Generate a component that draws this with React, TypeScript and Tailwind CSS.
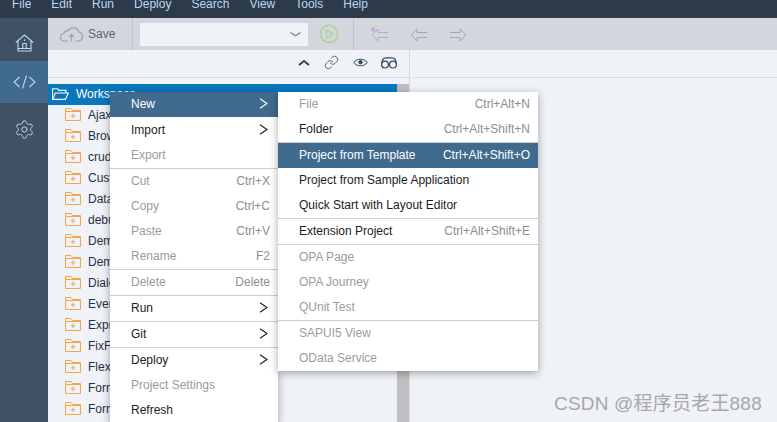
import React from 'react';
import { Settings, Link } from 'lucide-react';

const menuBar = ['File', 'Edit', 'Run', 'Deploy', 'Search', 'View', 'Tools', 'Help'];

const projects = [
  'AjaxDemo', 'BrowserDemo', 'crudDemo', 'CustomControl', 'DataBinding', 'debugDemo', 'DemoApp', 'DemoList',
  'DialogDemo', 'EventDemo', 'ExpressionDemo', 'FixFlex', 'FlexBox', 'FormDemo', 'FormSimple',
];

interface MenuItem {
  label: string;
  shortcut?: string;
  disabled?: boolean;
  active?: boolean;
  arrow?: boolean;
  line?: boolean;
  gap?: boolean;
}

const mainMenu: MenuItem[] = [
  { label: 'New', active: true, arrow: true },
  { label: 'Import', arrow: true, gap: true },
  { label: 'Export', disabled: true },
  { label: 'Cut', shortcut: 'Ctrl+X', disabled: true, line: true },
  { label: 'Copy', shortcut: 'Ctrl+C', disabled: true },
  { label: 'Paste', shortcut: 'Ctrl+V', disabled: true },
  { label: 'Rename', shortcut: 'F2', disabled: true },
  { label: 'Delete', shortcut: 'Delete', disabled: true, line: true },
  { label: 'Run', arrow: true, line: true },
  { label: 'Git', arrow: true, line: true },
  { label: 'Deploy', arrow: true, line: true },
  { label: 'Project Settings', disabled: true },
  { label: 'Refresh' },
];

const newMenu: MenuItem[] = [
  { label: 'File', shortcut: 'Ctrl+Alt+N', disabled: true },
  { label: 'Folder', shortcut: 'Ctrl+Alt+Shift+N' },
  { label: 'Project from Template', shortcut: 'Ctrl+Alt+Shift+O', active: true, line: true },
  { label: 'Project from Sample Application' },
  { label: 'Quick Start with Layout Editor' },
  { label: 'Extension Project', shortcut: 'Ctrl+Alt+Shift+E', line: true },
  { label: 'OPA Page', disabled: true, line: true },
  { label: 'OPA Journey', disabled: true },
  { label: 'QUnit Test', disabled: true },
  { label: 'SAPUI5 View', disabled: true, line: true },
  { label: 'OData Service', disabled: true },
];

const MenuChevron = () => (
  <svg width="9" height="11" viewBox="0 0 9 11" fill="none" stroke="currentColor" strokeWidth="1.1" className="mr-0.5">
    <path d="M1 0.8L8 5.5L1 10.2" />
  </svg>
);

const MenuRow: React.FC<{ item: MenuItem }> = ({ item }) => {
  const tone = item.active ? 'bg-[#416a8f] text-white' : item.disabled ? 'text-[#9b9b9b]' : 'text-[#1c1c1c]';
  return (
    <div className={item.line ? 'border-t border-[#cfcfcf]' : item.gap ? 'border-t border-transparent' : ''}>
      <div className={`flex h-[25px] items-center justify-between pb-[2px] pl-[21px] pr-2 ${tone}`}>
        <span>{item.label}</span>
        {item.shortcut && (
          <span className={item.active ? 'text-white' : 'text-[#8e8e8e]'}>{item.shortcut}</span>
        )}
        {item.arrow && <MenuChevron />}
      </div>
    </div>
  );
};

const HomeIcon = () => (
  <svg width="19" height="18" viewBox="0 0 19 18" fill="none" stroke="#bcd7f2" strokeWidth="1.1">
    <path d="M0.8 8.5L9.5 1L18.2 8.5M3 7V17H16V7M2.5 14.5H16.5" />
    <path d="M7.8 14.5V9.5H11.2V14.5" />
    <path d="M9.5 5.2V7" />
  </svg>
);

const CodeIcon = () => (
  <svg width="23" height="14" viewBox="0 0 23 14" fill="none" stroke="#bcd7f2" strokeWidth="1.1">
    <path d="M6.5 2L1 7L6.5 12M16.5 2L22 7L16.5 12M13.5 0.5L9.5 13.5" />
  </svg>
);

const CloudIcon = () => (
  <svg width="24" height="16" viewBox="0 0 24 16" fill="none" stroke="#9aa1a8" strokeWidth="1.2">
    <path d="M8 15H4.5A3.8 3.8 0 0 1 4 7.4A3.2 3.2 0 0 1 8 4.8A6 6 0 0 1 19 6.2A4.5 4.5 0 0 1 19 15H15" />
    <path d="M11.5 15.5V9M9 11L11.5 8.5L14 11" />
  </svg>
);

const WorkspaceFolder = () => (
  <svg width="17" height="12" viewBox="0 0 17 12" fill="none" stroke="#ffffff" strokeWidth="1.1">
    <path d="M0.6 11.4V0.8H5.5L7 2.4H14V5" />
    <path d="M0.6 11.4H13.4L16.4 5H3.4Z" />
  </svg>
);

const ProjectFolder = () => (
  <svg width="16" height="13" viewBox="0 0 16 13" fill="none" stroke="#f5a545" strokeWidth="1">
    <path d="M0.5 12.5V0.5H6L7.5 2.5H15.5V12.5Z" />
    <path d="M0.5 3.5H15.5" />
    <path d="M8 5.5V10M5.8 7.8H10.2" />
  </svg>
);

const CollapseIcon = () => (
  <svg width="12" height="7" viewBox="0 0 12 7" fill="none" stroke="#33475b" strokeWidth="2">
    <path d="M1 6L6 2L11 6" />
  </svg>
);

const EyeIcon = () => (
  <svg width="15" height="11" viewBox="0 0 15 11" fill="none" stroke="#33475b" strokeWidth="1">
    <path d="M0.7 5.5C3.5 1.2 11.5 1.2 14.3 5.5C11.5 9.8 3.5 9.8 0.7 5.5Z" />
    <circle cx="7.5" cy="5.2" r="1.7" fill="#33475b" />
  </svg>
);

const Glasses = () => (
  <svg width="16" height="12" viewBox="0 0 16 12" fill="none" stroke="#33475b" strokeWidth="1.2">
    <circle cx="4" cy="7.6" r="3.4" />
    <circle cx="12" cy="7.6" r="3.4" />
    <path d="M0.8 6.5C1 2.5 2.5 0.8 5 0.8H11C13.5 0.8 15 2.5 15.2 6.5M7.4 7H8.6" />
  </svg>
);

const PlayCircle = () => (
  <svg width="20" height="20" viewBox="0 0 20 20" fill="none" stroke="#a6d494" strokeWidth="1.6">
    <circle cx="10" cy="10" r="8.6" />
    <path d="M7.5 5.8L14 10L7.5 14.2Z" strokeWidth="1.2" strokeLinejoin="round" />
  </svg>
);

const ComboChevron = () => (
  <svg width="11" height="5" viewBox="0 0 11 5" fill="none" stroke="#7a828a" strokeWidth="1.2">
    <path d="M0.5 0.5L5.5 3.8L10.5 0.5" />
  </svg>
);

const ArrowOutline: React.FC<{ flip?: boolean; color: string; spark?: boolean }> = ({ flip, color, spark }) => (
  <svg width="18" height="14" viewBox="0 0 18 14" fill="none" stroke={color} strokeWidth="1" className={flip ? '-scale-x-100' : ''}>
    <path d="M7 2L1 8L7 14V10.5H17M17 5.5H7V2" />
    {spark && <path d="M2 0V5M0 2.5H4.5" strokeWidth="1.4" />}
  </svg>
);

const App = () => (
  <div className="relative flex h-[422px] w-[777px] flex-col overflow-hidden bg-[#eff2f7] font-['Liberation_Sans',Arial,sans-serif] text-xs">
    <div className="flex h-[18px] shrink-0 gap-5 overflow-hidden bg-[#2c3a49] pl-3 leading-[9px] text-[#bcd7f2]">
      {menuBar.map((m) => (
        <span key={m}>{m}</span>
      ))}
    </div>

    <div className="flex min-h-0 flex-1">
      <div className="flex w-12 shrink-0 flex-col bg-[#3f5163] text-[#bcd7f2]">
        <div className="flex h-[43px] items-center justify-center pt-[6px]">
          <HomeIcon />
        </div>
        <div className="flex h-[42px] items-center justify-center bg-[#416a8f]">
          <CodeIcon />
        </div>
        <div className="flex h-[52px] items-center justify-center">
          <Settings size={21} strokeWidth={1.1} />
        </div>
      </div>

      <div className="flex min-w-0 flex-1 flex-col">
        <div className="flex h-8 shrink-0 items-center bg-[#d3d7dd]">
          <div className="flex h-full w-[85px] items-center gap-1 border-r border-[#c0c4ca] pl-3 text-[#5b6570]">
            <CloudIcon />
            <span>Save</span>
          </div>
          <div className="ml-[7px] flex h-[23px] w-[168px] items-center justify-end bg-[#eff2f7] pr-[7px]">
            <ComboChevron />
          </div>
          <div className="ml-[11px] mr-[14px]">
            <PlayCircle />
          </div>
          <div className="flex h-full items-center gap-[21px] border-l border-[#c0c4ca] pl-[17px]">
            <ArrowOutline color="#b7a9d3" spark />
            <ArrowOutline color="#a0a8b0" />
            <ArrowOutline color="#a0a8b0" flip />
          </div>
        </div>

        <div className="flex min-h-0 flex-1">
          <div className="flex w-[362px] shrink-0 flex-col border-r border-[#d8dbe0]">
            <div className="flex h-7 shrink-0 items-center justify-end gap-[13px] border-b border-[#d8dbe0] pb-0.5 pr-[12px] text-[#33475b]">
              <CollapseIcon />
              <Link size={15} strokeWidth={1.3} className="mx-px" />
              <EyeIcon />
              <Glasses />
            </div>
            <div className="flex min-h-0 flex-1 pt-1.5">
              <div className="min-w-0 flex-1">
                <div className="flex h-[21px] items-center gap-[7px] bg-[#0a77bd] pb-[2px] pl-[4px] text-white">
                  <WorkspaceFolder />
                  <span>Workspace</span>
                </div>
                {projects.map((p) => (
                  <div key={p} className="flex h-[21px] items-center gap-[7px] pb-[2px] pl-[17px] text-[#1f3247]">
                    <ProjectFolder />
                    <span>{p}</span>
                  </div>
                ))}
              </div>
              <div className="w-3 shrink-0 bg-[#c0c0c0]" />
            </div>
          </div>
          <div className="ml-[3px] flex-1">
            <div className="h-7 border-b border-[#d8dbe0]" />
          </div>
        </div>
      </div>
    </div>

    <div className="absolute left-[110px] top-[92px] w-[168px] bg-white shadow-[0_2px_8px_rgba(0,0,0,0.35)]">
      {mainMenu.map((item) => (
        <MenuRow key={item.label} item={item} />
      ))}
    </div>

    <div className="absolute left-[278px] top-[92px] w-[260px] bg-white shadow-[0_2px_8px_rgba(0,0,0,0.35)]">
      {newMenu.map((item) => (
        <MenuRow key={item.label} item={item} />
      ))}
    </div>

    <div className="absolute left-[554px] top-[393px] font-['Liberation_Sans','Noto_Sans_CJK_SC',sans-serif] text-[19px] leading-[22px] tracking-[0.2px] text-[#a8a8a8]">
      CSDN @程序员老王888
    </div>
  </div>
);

export default App;
